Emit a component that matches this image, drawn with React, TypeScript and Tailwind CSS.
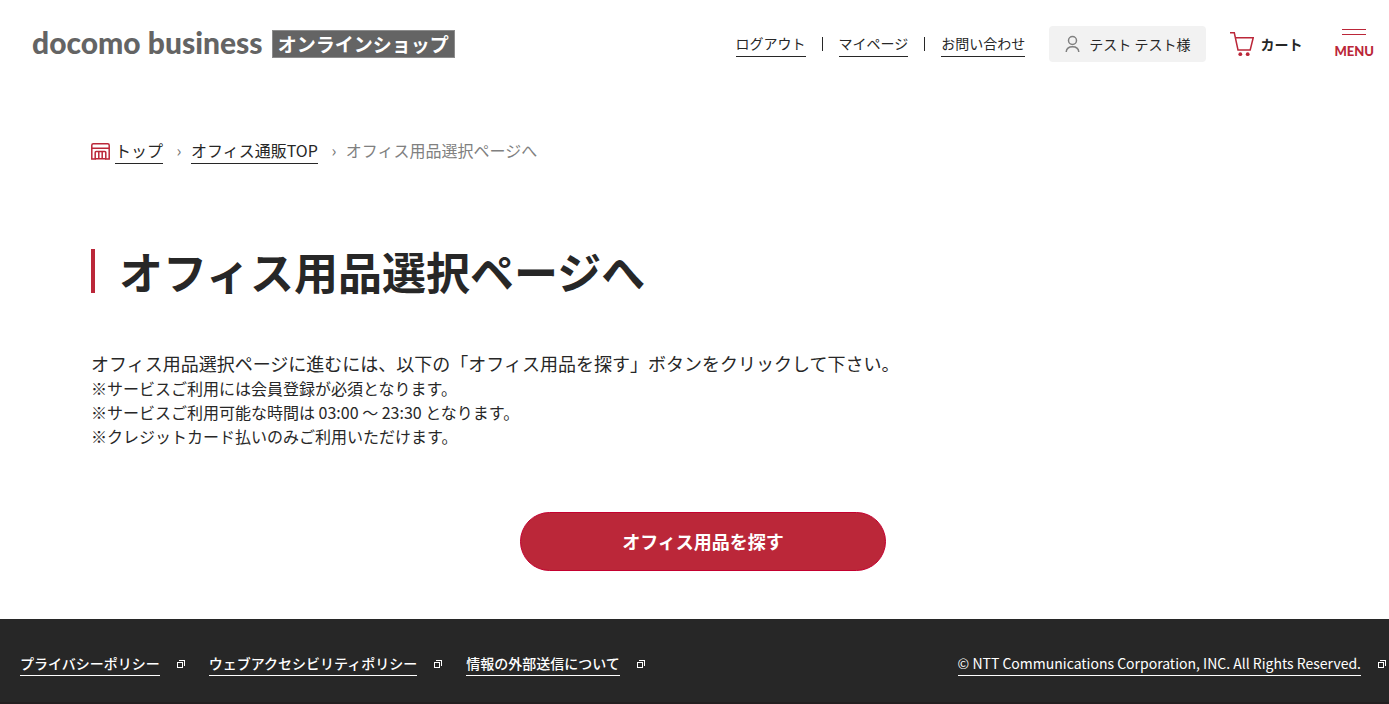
const headerLinks = [
    { title: 'ログアウト', href: '#logout' },
    { title: 'マイページ', href: '#mypage' },
    { title: 'お問い合わせ', href: '#contact' },
];

const footerLinks = [
    { title: 'プライバシーポリシー', href: '#privacy' },
    { title: 'ウェブアクセシビリティポリシー', href: '#accessibility' },
    { title: '情報の外部送信について', href: '#external' },
];

const notes = [
    '※サービスご利用には会員登録が必須となります。',
    '※サービスご利用可能な時間は 03:00 ～ 23:30 となります。',
    '※クレジットカード払いのみご利用いただけます。',
];

const UserIcon = () => (
    <svg width="16" height="18" viewBox="0 0 16 18" fill="none" stroke="#808080" strokeWidth="1.5" aria-hidden="true">
        <circle cx="7.500" cy="5.500" r="4" />
        <path d="M1.200 17c.3-3.700 3-5.200 6.300-5.200s6 1.500 6.300 5.200" />
    </svg>
);

const CartIcon = () => (
    <svg width="24" height="26" viewBox="0 0 24 26" fill="none" stroke="#bb2739" strokeWidth="1.5" aria-hidden="true">
        <path d="M0 1.800h4.300L8 19h12.200L23.200 6.800H5.400" />
        <circle cx="10.300" cy="23.200" r="1.900" fill="#bb2739" stroke="none" />
        <circle cx="17.700" cy="23.200" r="1.900" fill="#bb2739" stroke="none" />
    </svg>
);

const ShopIcon = () => (
    <svg width="19" height="17" viewBox="0 0 19 17" fill="none" stroke="#bb2739" strokeWidth="1.500" aria-hidden="true">
        <path d="M.8 16V2.300Q.8.800 2.300.800h14.400q1.500 0 1.500 1.500V16h-3.400V9.500q0-1-1-1H5.200q-1 0-1 1V16H.8z" />
        <path d="M.8 5.300h17.400M4.200 15.800h10.600M7.800 8.500V16M11.200 8.500V16" />
    </svg>
);

const BlankIcon = () => (
    <svg width="8" height="8" viewBox="0 0 8 8" fill="none" stroke="#fff" className="shrink-0" shapeRendering="crispEdges" aria-hidden="true">
        <path d="M.5 2.500h5v5h-5zM2 .5h5.500V6" />
    </svg>
);

const Header = () => (
    <header className="flex h-22 items-center justify-between pr-[15px] pl-8">
        <a href="#home" className="flex items-center gap-[9px] text-[#646464]">
            <span className="pb-1 font-['Lato'] text-[30px] leading-7 font-black">docomo business</span>
            <span className="border border-[#8c8c8c] bg-[#646464] px-[5px] text-[19px] leading-[26px] font-bold text-white">オンラインショップ</span>
        </a>

        <div className="flex items-center">
            <nav className="mr-6 flex items-center gap-4">
                {headerLinks.map((link, i) => (
                    <div key={link.href} className="flex items-center gap-4">
                        {i > 0 && <span className="h-3.5 w-px bg-[#272727]" />}
                        <a href={link.href} className="border-b border-[#272727] pb-0.5 text-sm leading-[22px]">
                            {link.title}
                        </a>
                    </div>
                ))}
            </nav>
            <button type="button" className="mr-6 flex h-9 items-center gap-2 rounded bg-[#f2f2f2] px-4 text-sm">
                <UserIcon />
                テスト テスト様
            </button>
            <a href="#cart" className="mr-8 flex items-center gap-1.5 text-sm font-bold">
                <CartIcon />
                カート
            </a>
            <button type="button" className="flex flex-col items-center text-[#bb2739]">
                <span className="h-1.5 w-6 border-y border-[#bb2739]" />
                <span className="mt-2 font-['Lato'] text-[13px] leading-4 font-black">MENU</span>
            </button>
        </div>
    </header>
);

const Breadcrumb = () => (
    <nav aria-label="breadcrumb" className="flex items-start leading-[22px]">
        <span className="pt-1">
            <ShopIcon />
        </span>
        <a href="#top" className="ml-[5px] border-b border-[#272727] pb-0.5">
            トップ
        </a>
        <span className="w-7 pl-1 text-center text-[#757575]">›</span>
        <a href="#office" className="border-b border-[#272727] pb-0.5">
            オフィス通販TOP
        </a>
        <span className="w-7 pl-1 text-center text-[#757575]">›</span>
        <span className="text-[#808080]">オフィス用品選択ページへ</span>
    </nav>
);

const FooterLink = ({ title, href }: { title: string; href: string }) => (
    <a href={href} className="flex items-center gap-[17px]">
        <span className="border-b border-white leading-6">{title}</span>
        <BlankIcon />
    </a>
);

const Footer = () => (
    <footer className="flex flex-wrap justify-between gap-x-6 border-b-2 border-[#231f20] bg-[#272727] pt-8 pr-[3px] pb-[26px] pl-5 text-sm text-white">
        <div className="flex flex-wrap gap-6 font-medium">
            {footerLinks.map((link) => (
                <FooterLink key={link.href} {...link} />
            ))}
        </div>
        <FooterLink title="© NTT Communications Corporation, INC. All Rights Reserved." href="#copyright" />
    </footer>
);

const App = () => {
    return (
        <div className="bg-white font-['Noto_Sans_CJK_JP',sans-serif] text-[#272727]">
            <Header />
            <main className="pt-[51px] pr-[74px] pb-12 pl-[91px]">
                <Breadcrumb />
                <h1 className="mt-[85px] border-l-4 border-[#bb2739] pl-6 text-[44px] leading-[44px] font-bold">オフィス用品選択ページへ</h1>
                <p className="mt-[57px] text-lg leading-[26px]">
                    オフィス用品選択ページに進むには、以下の「オフィス用品を探す」ボタンをクリックして下さい。
                </p>
                <ul className="leading-6">
                    {notes.map((note) => (
                        <li key={note}>{note}</li>
                    ))}
                </ul>
                <button
                    type="button"
                    className="mx-auto mt-16 block h-[59px] w-[366px] max-w-full rounded-full border border-[#c4002f] bg-[#bb2739] pb-0.5 text-lg font-bold text-white"
                >
                    オフィス用品を探す
                </button>
            </main>
            <Footer />
        </div>
    );
};

export default App;
